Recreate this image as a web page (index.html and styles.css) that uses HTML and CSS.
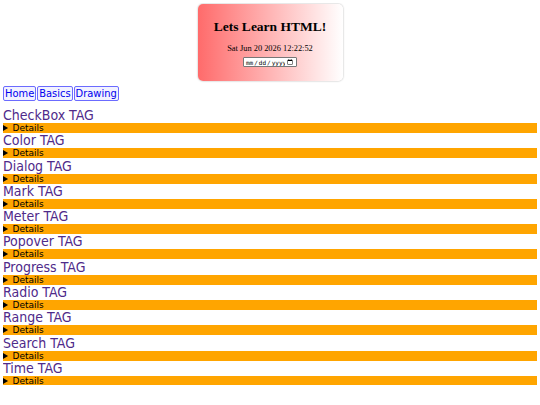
FILE: index.html
```html
<!DOCTYPE html>
<html lang="en">
<head>
  <meta charset="UTF-8" />
  <meta name="viewport" content="width=device-width, initial-scale=1.0"/>
  <title>Lets Learn HTML</title>
  <link rel="stylesheet" href="styles.css">
</head>
<body>
  <div class="header">
    <h1>Lets Learn HTML!</h1>
    <p class="clock">Sat Jun 20 2026 12:22:52</p>
    <input type="date" class="datebox">
  </div>

  <nav class="nav">
    <a href="#" class="nav-btn">Home</a>
    <a href="#" class="nav-btn">Basics</a>
    <a href="#" class="nav-btn">Drawing</a>
  </nav>

  <div class="tags">
    <div class="tag"><a href="#" class="tag-title">CheckBox TAG</a><details><summary>Details</summary></details></div>
    <div class="tag"><a href="#" class="tag-title">Color TAG</a><details><summary>Details</summary></details></div>
    <div class="tag"><a href="#" class="tag-title">Dialog TAG</a><details><summary>Details</summary></details></div>
    <div class="tag"><a href="#" class="tag-title">Mark TAG</a><details><summary>Details</summary></details></div>
    <div class="tag"><a href="#" class="tag-title">Meter TAG</a><details><summary>Details</summary></details></div>
    <div class="tag"><a href="#" class="tag-title">Popover TAG</a><details><summary>Details</summary></details></div>
    <div class="tag"><a href="#" class="tag-title">Progress TAG</a><details><summary>Details</summary></details></div>
    <div class="tag"><a href="#" class="tag-title">Radio TAG</a><details><summary>Details</summary></details></div>
    <div class="tag"><a href="#" class="tag-title">Range TAG</a><details><summary>Details</summary></details></div>
    <div class="tag"><a href="#" class="tag-title">Search TAG</a><details><summary>Details</summary></details></div>
    <div class="tag"><a href="#" class="tag-title">Time TAG</a><details><summary>Details</summary></details></div>
  </div>
</body>
</html>
```

FILE: styles.css
```css
body {
  margin: 3px;
  font-family: "DejaVu Sans", sans-serif;
  background: #fff;
}
.header {
  width: 145px;
  height: 77px;
  margin: 1px auto 0;
  box-sizing: border-box;
  padding-top: 14px;
  text-align: center;
  font-family: "Liberation Serif", serif;
  background: linear-gradient(to right, #ff6b6b, #fff);
  border-radius: 5px;
  box-shadow: 0 0 2px rgba(0,0,0,0.35);
}
.header h1 {
  margin: 0;
  font-size: 13.5px;
  line-height: 18px;
}
.clock {
  margin: 8px 0 0;
  font-size: 8.4px;
  line-height: 10px;
}
.datebox {
  display: block;
  margin: 3px auto 0;
  font-size: 6px;
  width: 54px;
  height: 10px;
  padding: 0 1px;
  box-sizing: border-box;
  border: 1px solid #777;
  border-radius: 1px;
}
.nav {
  display: flex;
  gap: 1px;
  margin-top: 5px;
}
.nav-btn {
  display: block;
  font-family: "DejaVu Sans Condensed", "DejaVu Sans", sans-serif;
  font-size: 11px;
  line-height: 13px;
  color: #0000ee;
  text-decoration: none;
  background: #f2f2ff;
  border: 1px solid #6b6bff;
  border-radius: 2px;
  padding: 0 1px;
}
.tags {
  margin-top: 6px;
}
.tag {
  height: 25.3px;
}
.tag-title {
  display: block;
  font-family: "DejaVu Sans Condensed", "DejaVu Sans", sans-serif;
  font-size: 14px;
  line-height: 16px;
  color: #4f2a8a;
  text-decoration: none;
}
details {
  background: #ffa500;
  font-size: 9px;
  line-height: 10px;
  height: 10px;
}
summary {
  color: #000;
}
```
